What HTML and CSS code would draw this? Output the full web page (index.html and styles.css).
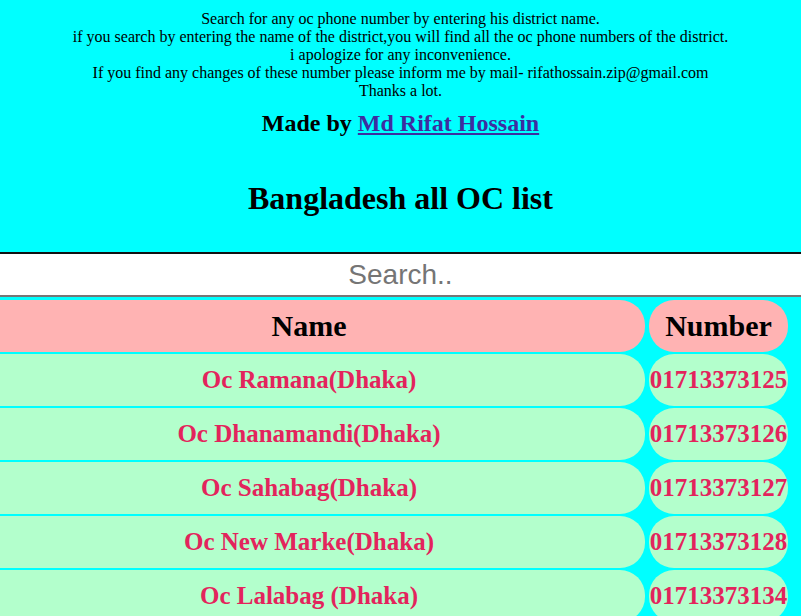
FILE: index.html
```html
<!DOCTYPE html>
<html lang="en">
<head>
<meta charset="utf-8">
<title>Bangladesh all OC list</title>
<link rel="stylesheet" href="styles.css">
</head>
<body>
<header class="intro">
  <p class="notes">Search for any oc phone number by entering his district name.<br>
  if you search by entering the name of the district,you will find all the oc phone numbers of the district.<br>
  i apologize for any inconvenience.<br>
  If you find any changes of these number please inform me by mail- rifathossain.zip@gmail.com<br>
  Thanks a lot.</p>
  <h2 class="credit">Made by <a class="author" href="#">Md Rifat Hossain</a></h2>
  <h1 class="title">Bangladesh all OC list</h1>
</header>
<input class="search" type="text" placeholder="Search..">
<table class="oc-table">
  <thead>
    <tr><th class="name-col">Name</th><th class="num-col">Number</th></tr>
  </thead>
  <tbody>
    <tr><td class="name-col">Oc Ramana(Dhaka)</td><td class="num-col">01713373125</td></tr>
    <tr><td class="name-col">Oc Dhanamandi(Dhaka)</td><td class="num-col">01713373126</td></tr>
    <tr><td class="name-col">Oc Sahabag(Dhaka)</td><td class="num-col">01713373127</td></tr>
    <tr><td class="name-col">Oc New Marke(Dhaka)</td><td class="num-col">01713373128</td></tr>
    <tr><td class="name-col">Oc Lalabag (Dhaka)</td><td class="num-col">01713373134</td></tr>
  </tbody>
</table>
</body>
</html>
```
FILE: styles.css
```css
html {
  overflow: hidden;
}
body {
  margin: 0;
  background: #00ffff;
  font-family: "Liberation Serif", "Times New Roman", serif;
  color: #000;
}
.intro {
  text-align: center;
  padding-top: 10px;
}
.notes {
  margin: 0;
  font-size: 16px;
  line-height: 18px;
}
.credit {
  margin: 10px 0 0;
  font-size: 24px;
  font-weight: bold;
}
.author {
  color: #3d2ea0;
}
.title {
  margin: 43px 0 0;
  padding-bottom: 35px;
  font-size: 32px;
  font-weight: bold;
}
.search {
  display: block;
  box-sizing: border-box;
  width: 100%;
  height: 45px;
  margin: 0;
  padding: 0;
  border: none;
  border-top: 2px solid #111;
  border-bottom: 2px solid #767676;
  background: #fff;
  font-family: "Liberation Sans", Arial, sans-serif;
  font-size: 28px;
  text-align: center;
  outline: none;
}
.search::placeholder {
  color: #757575;
}
.oc-table {
  margin: 1px 0 0 -31px;
  width: 823px;
  border-spacing: 4px 2px;
}
.oc-table th,
.oc-table td {
  height: 52px;
  padding: 0;
  border-radius: 25px;
  text-align: center;
  vertical-align: middle;
  font-weight: bold;
}
.oc-table th {
  background: #ffb3b3;
  font-size: 30px;
  color: #000;
}
.oc-table td {
  background: #b3ffcc;
  font-size: 25px;
  color: #e3245c;
}
.oc-table .num-col {
  width: 139px;
}
```
